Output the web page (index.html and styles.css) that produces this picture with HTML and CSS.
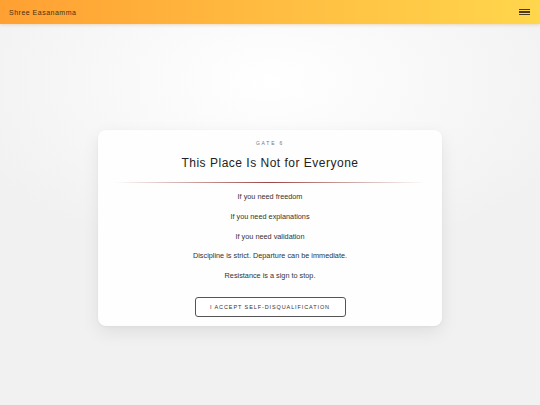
FILE: index.html
```html
<!DOCTYPE html>
<html>
<head>
<meta charset="utf-8">
<link rel="stylesheet" href="styles.css">
</head>
<body>
<header class="topbar">
  <span class="brand">Shree Easanamma</span>
  <span class="menu"><span></span><span></span><span></span></span>
</header>
<main class="stage">
  <section class="card">
    <div class="gate">GATE 6</div>
    <h1 class="title">This Place Is Not for Everyone</h1>
    <div class="divider"></div>
    <p class="line">If you need freedom</p>
    <p class="line">If you need explanations</p>
    <p class="line">If you need validation</p>
    <p class="line">Discipline is strict. Departure can be immediate.</p>
    <p class="line">Resistance is a sign to stop.</p>
    <button class="accept">I ACCEPT SELF-DISQUALIFICATION</button>
  </section>
</main>
</body>
</html>
```
FILE: styles.css
```css
* { box-sizing: border-box; }
html, body { margin: 0; padding: 0; height: 100%; }
body {
  font-family: "Liberation Sans", Arial, sans-serif;
  background: radial-gradient(ellipse 60% 45% at 50% 20%, #ffffff 0%, #f9f9f9 45%, #f1f1f1 100%);
  color: #333;
  overflow: hidden;
}
.topbar {
  height: 24px;
  display: flex;
  align-items: center;
  justify-content: space-between;
  padding: 0 10px 0 9px;
  background: linear-gradient(90deg, #ffa033 0%, #ffbf42 55%, #ffd64c 100%);
  box-shadow: 0 1px 3px rgba(200, 120, 20, 0.25);
}
.brand {
  font-size: 7px;
  letter-spacing: 0.5px;
  color: #4a3210;
}
.menu {
  display: flex;
  flex-direction: column;
  gap: 1.5px;
  width: 11px;
}
.menu span {
  display: block;
  height: 1.3px;
  background: #4a3a1a;
}
.stage {
  height: 381px;
  display: flex;
  justify-content: center;
  align-items: center;
  padding-top: 27px;
}
.card {
  width: 344px;
  background: #fefefe;
  border-radius: 8px;
  box-shadow: 0 6px 18px rgba(0, 0, 0, 0.08), 0 1px 3px rgba(0, 0, 0, 0.04);
  padding: 9px 16px 9px;
  display: flex;
  flex-direction: column;
  align-items: center;
  text-align: center;
}
.gate {
  font-size: 5px;
  line-height: 8px;
  letter-spacing: 1.8px;
  color: #777;
}
.title {
  margin: 8px 0 0;
  font-size: 12px;
  line-height: 16px;
  font-weight: 400;
  letter-spacing: 0.5px;
  color: #222;
}
.divider {
  align-self: stretch;
  margin: 11px 0 0;
  height: 1px;
  background: linear-gradient(90deg, rgba(150,50,50,0) 0%, rgba(150,60,60,0.95) 50%, rgba(150,50,50,0) 100%);
}
.line {
  margin: 9.7px 0 0;
  font-size: 7.3px;
  line-height: 10px;
  color: #333;
}
.divider + .line { margin-top: 9px; }
.accept {
  margin-top: 16px;
  width: 151px;
  height: 20px;
  background: #fff;
  border: 1px solid #555;
  border-radius: 3px;
  font-family: "Liberation Sans", Arial, sans-serif;
  font-size: 5.5px;
  letter-spacing: 0.9px;
  color: #333;
  padding: 0;
}
```
